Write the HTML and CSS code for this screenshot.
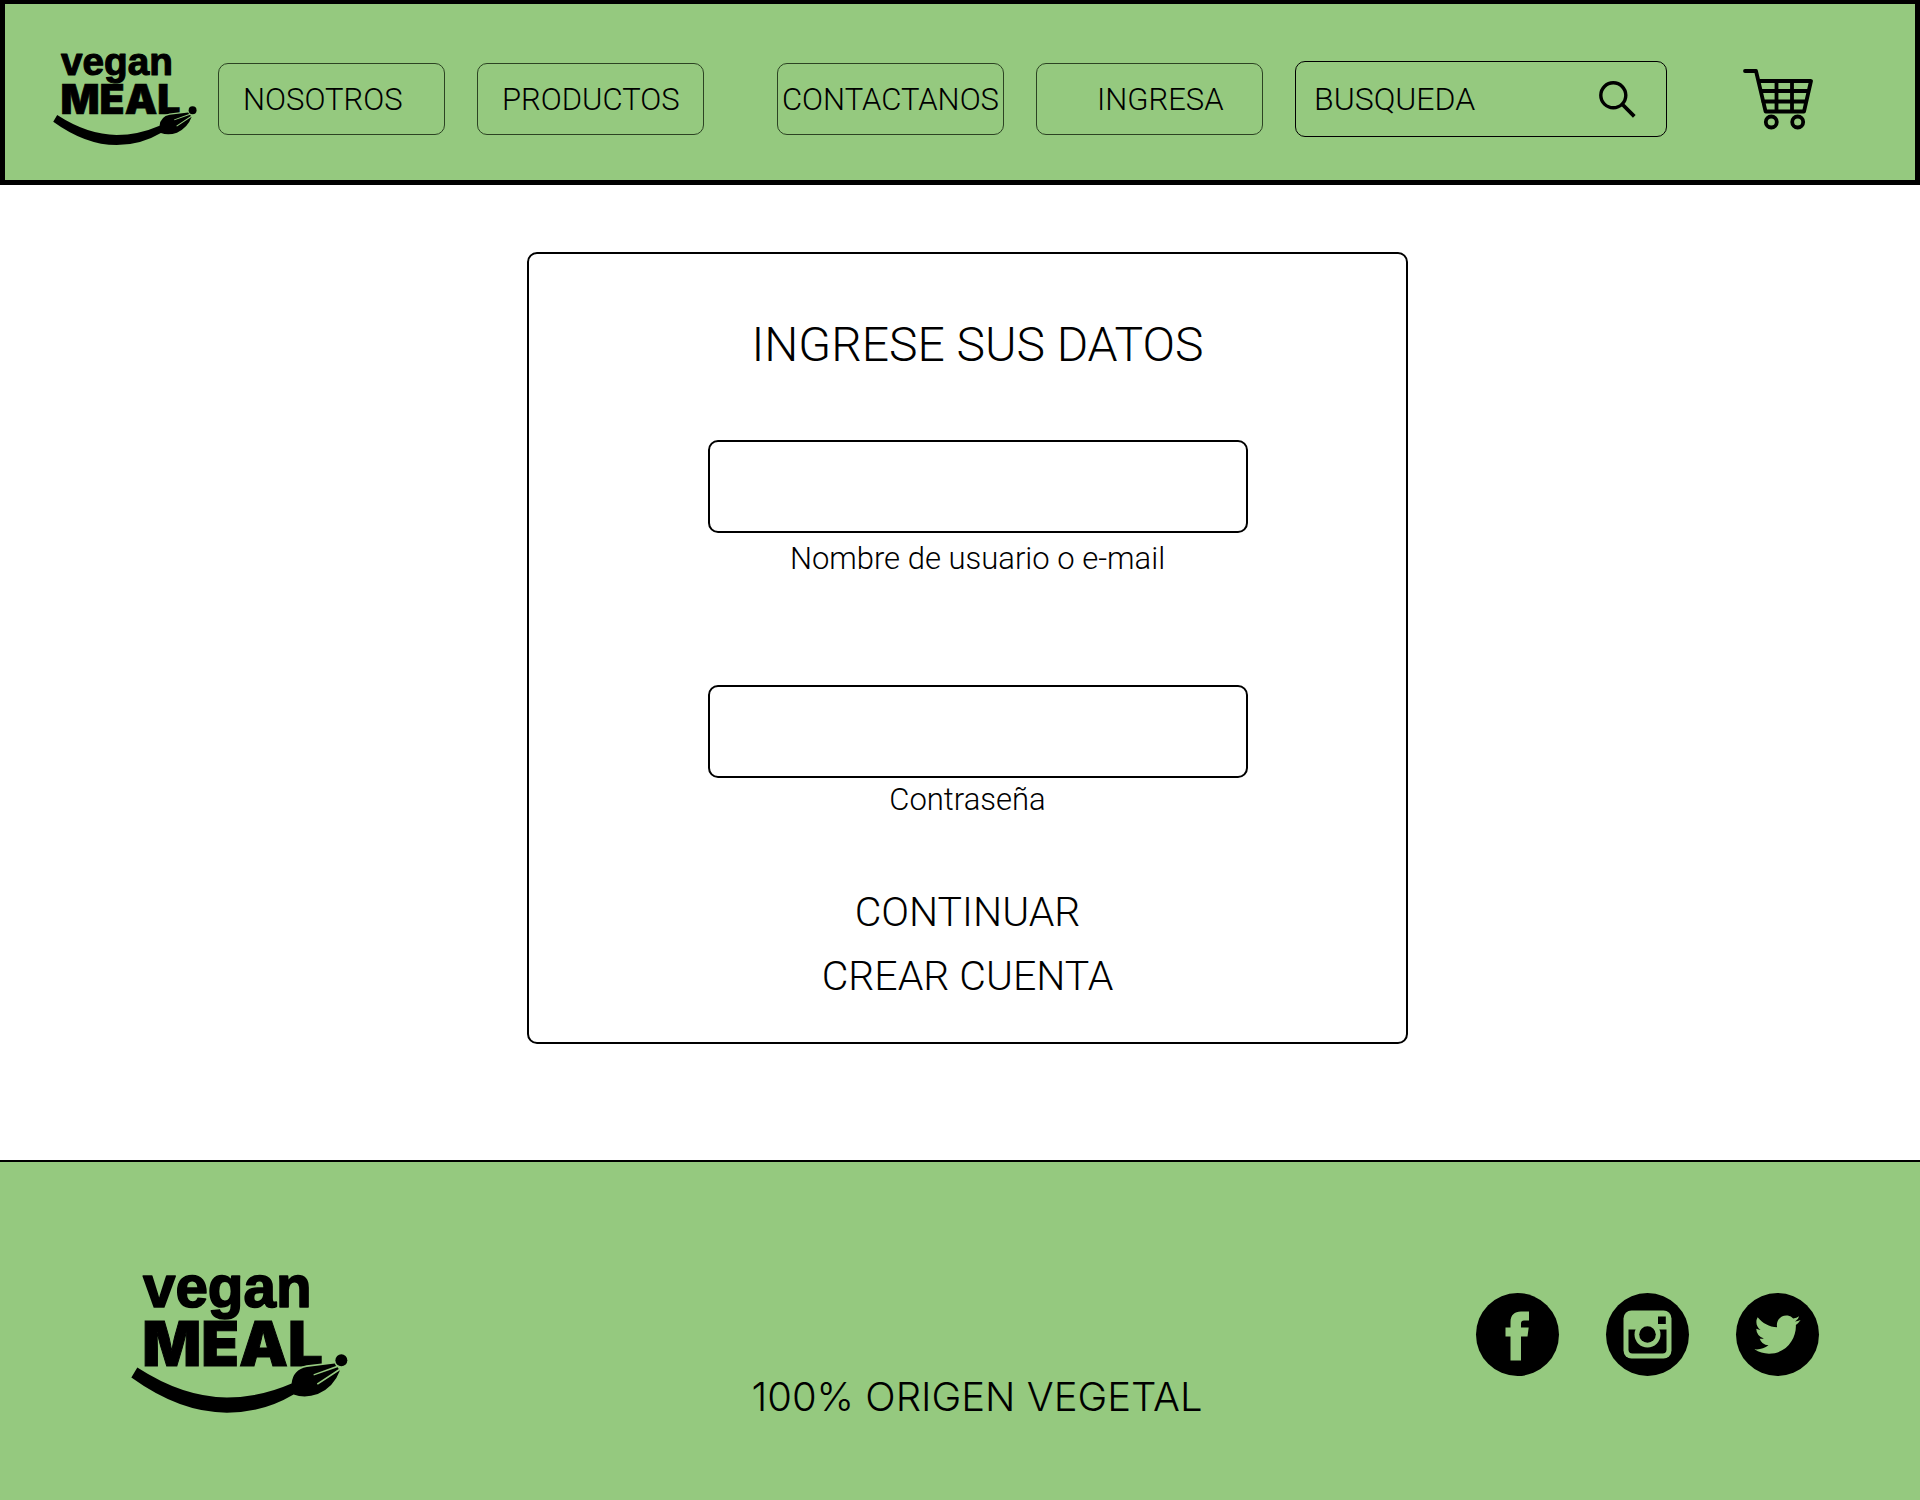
FILE: index.html
```html
<!DOCTYPE html>
<html lang="es">
<head>
<meta charset="utf-8">
<meta name="viewport" content="width=device-width, initial-scale=1">
<title>Vegan Meal - Ingresa</title>
<link rel="stylesheet" href="styles.css">
</head>
<body>
<header class="header">
  <a class="header-logo" href="#" aria-label="Vegan Meal">
    <svg viewBox="92 100 654 420">
      <text class="logo-top" x="128" y="199">vegan</text>
      <text class="logo-bottom" x="126" y="378">MEAL</text>
      <circle cx="726" cy="360" r="18"/>
      <path class="logo-gap" d="M580 432Q580 388 622 380L706 370"/>
      <path d="M111 382Q250 472 381 472Q480 472 576 430Q580 388 622 380L706 370L710 377L642 402L643 406L715 381L718 386L652 430L655 434L722 390Q704 440 655 462Q615 476 582 463Q490 518 381 518Q240 518 93 412Z"/>
    </svg>
  </a>
  <nav class="nav">
    <a class="nav-link" href="#">NOSOTROS</a>
    <a class="nav-link" href="#">PRODUCTOS</a>
    <a class="nav-link nav-link-contact" href="#">CONTACTANOS</a>
    <a class="nav-link nav-link-login" href="#">INGRESA</a>
  </nav>
  <form class="search">
    <input class="search-input" type="search" placeholder="BUSQUEDA" aria-label="Busqueda">
    <button class="search-button" type="submit" aria-label="Buscar">
      <svg viewBox="0 0 37 37" fill="none" stroke="#000"><circle cx="14.3" cy="14.3" r="12.5" stroke-width="3.4"/><path d="M23.5 23.5L35.3 35.3" stroke-width="3.8"/></svg>
    </button>
  </form>
  <a class="cart" href="#" aria-label="Carrito">
    <svg viewBox="0 0 70 60" fill="none" stroke="#000" stroke-width="3.8" stroke-linecap="round" stroke-linejoin="round"><path d="M2 2H13L22.6 42.5H61L68 12H16M18 22H65M20 32.500H63M33.500 12V42M49 12V42"/><circle cx="28.300" cy="53" r="5.500"/><circle cx="54.700" cy="53" r="5.500"/></svg>
  </a>
</header>

<main class="main">
  <form class="card">
    <h1 class="title">INGRESE SUS DATOS</h1>
    <div class="field">
      <input class="field-input" id="usuario" type="text">
      <label class="field-label" for="usuario">Nombre de usuario o e-mail</label>
    </div>
    <div class="field field-password">
      <input class="field-input" id="clave" type="password">
      <label class="field-label" for="clave">Contraseña</label>
    </div>
    <div class="actions">
      <button class="action" type="submit">CONTINUAR</button>
      <button class="action" type="button">CREAR CUENTA</button>
    </div>
  </form>
</main>

<footer class="footer">
  <a class="footer-logo" href="#" aria-label="Vegan Meal">
    <svg viewBox="92 100 654 420">
      <text class="logo-top" x="128" y="199">vegan</text>
      <text class="logo-bottom" x="126" y="378">MEAL</text>
      <circle cx="726" cy="360" r="18"/>
      <path class="logo-gap" d="M580 432Q580 388 622 380L706 370"/>
      <path d="M111 382Q250 472 381 472Q480 472 576 430Q580 388 622 380L706 370L710 377L642 402L643 406L715 381L718 386L652 430L655 434L722 390Q704 440 655 462Q615 476 582 463Q490 518 381 518Q240 518 93 412Z"/>
    </svg>
  </a>
  <p class="slogan">100% ORIGEN VEGETAL</p>
  <div class="social">
    <a class="social-link" href="#" aria-label="Facebook"><svg viewBox="0 0 83 83"><circle cx="41.500" cy="41.500" r="41.500"/><path class="glyph" d="M34.500 67.500V43.500H29.500V34.500H34.500V29C34.500 22 38.500 18.500 45 18.500H53V27.500H48C46 27.500 45 28.500 45 30.500V34.500H52.700L51.500 43.500H45V67.500Z"/></svg></a>
    <a class="social-link" href="#" aria-label="Instagram"><svg viewBox="0 0 83 83"><circle cx="41.500" cy="41.500" r="41.500"/><rect class="glyph" x="17.500" y="17.500" width="48" height="48" rx="8"/><path d="M22.500 36.500H60.500V56.500Q60.500 60.500 56.500 60.500H26.500Q22.500 60.500 22.500 56.500Z"/><circle class="glyph" cx="41.500" cy="41.500" r="13"/><circle cx="41.500" cy="41.500" r="8.300"/><path d="M52 23.500H59.800V31H52Z"/></svg></a>
    <a class="social-link" href="#" aria-label="Twitter"><svg viewBox="0 0 83 83"><circle cx="41.500" cy="41.500" r="41.500"/><path class="glyph" transform="translate(18.500 18) scale(1.920 1.960)" d="M23.954 4.569a10 10 0 0 1-2.825.775 4.958 4.958 0 0 0 2.163-2.723c-.951.555-2.005.959-3.127 1.184a4.920 4.920 0 0 0-8.384 4.482C7.691 8.094 4.066 6.130 1.640 3.161a4.822 4.822 0 0 0-.666 2.475c0 1.710.87 3.213 2.188 4.096a4.904 4.904 0 0 1-2.228-.616v.061a4.923 4.923 0 0 0 3.946 4.827 4.996 4.996 0 0 1-2.212.085 4.937 4.937 0 0 0 4.604 3.417 9.868 9.868 0 0 1-6.102 2.105c-.39 0-.779-.023-1.170-.067a13.995 13.995 0 0 0 7.557 2.209c9.054 0 13.999-7.496 13.999-13.986 0-.209 0-.420-.015-.630a9.936 9.936 0 0 0 2.460-2.548l-.047-.020z"/></svg></a>
  </div>
</footer>
</body>
</html>
```

FILE: styles.css
```css
* { box-sizing: border-box; }

body {
  margin: 0;
  min-height: 100vh;
  display: flex;
  flex-direction: column;
  background: #fff;
  color: #000;
  font-family: Roboto, "Open Sans", sans-serif;
  font-weight: 300;
}

a { color: inherit; text-decoration: none; }
svg { display: block; width: 100%; overflow: visible; }
input, button { font: inherit; color: inherit; }

.logo-top {
  font: 700 176px "Liberation Sans", Arial, sans-serif;
  stroke: #000;
  stroke-width: 5px;
  stroke-linejoin: round;
}

.logo-bottom {
  font: 900 186px Inter, sans-serif;
  stroke: #000;
  stroke-width: 3px;
}

.logo-gap {
  fill: none;
  stroke: #95c97f;
  stroke-width: 10px;
}

.header {
  display: flex;
  align-items: center;
  padding: 49px 102px 35px 48px;
  border: solid #000;
  border-width: 4px 5px 5px;
  background: #95c97f;
}

.header-logo { flex: none; width: 144px; }

.nav { display: flex; gap: 32px; margin-left: 21px; }

.nav-link {
  display: flex;
  align-items: center;
  width: 227px;
  height: 72px;
  padding-left: 24px;
  border: 1px solid #2c4323;
  border-radius: 10px;
  font-size: 31px;
}

.nav-link-contact {
  justify-content: center;
  margin-left: 41px;
  padding-left: 0;
}

.nav-link-login { padding-left: 60px; }

.search {
  display: flex;
  align-items: center;
  flex: 1;
  min-width: 0;
  height: 76px;
  margin: 0 76px 0 32px;
  padding: 0 30px 0 18px;
  border: 1px solid #000;
  border-radius: 10px;
}

.search-input {
  flex: 1;
  min-width: 0;
  padding: 0;
  border: 0;
  background: none;
  font-size: 32px;
}

.search-input::placeholder { color: #000; opacity: 1; }

.search-button {
  flex: none;
  width: 37px;
  padding: 0;
  border: 0;
  background: none;
}

.cart { flex: none; width: 70px; }

.main {
  display: flex;
  justify-content: center;
  padding: 67px 0 116px 15px;
}

.card {
  width: 881px;
  padding: 61px 0 34px;
  border: 2px solid #000;
  border-radius: 10px;
}

.title {
  margin: 0;
  padding-left: 20px;
  font-size: 48px;
  line-height: 60px;
  font-weight: 300;
  text-align: center;
}

.field {
  display: flex;
  flex-direction: column;
  align-items: center;
  margin-top: 65px;
  padding-left: 20px;
}

.field-input {
  width: 540px;
  height: 93px;
  padding: 0 24px;
  border: 2px solid #000;
  border-radius: 10px;
  background: none;
  font-size: 31px;
}

.field-label {
  margin-top: 8px;
  font-size: 31px;
  line-height: 36px;
}

.field-password { margin-top: 108px; }
.field-password .field-label { margin-top: 4px; padding-right: 20px; }

.actions {
  display: flex;
  flex-direction: column;
  align-items: center;
  margin-top: 62px;
}

.action {
  padding: 0;
  border: 0;
  background: none;
  font-size: 41px;
  line-height: 64px;
}

.footer {
  flex: 1;
  display: grid;
  grid-template-columns: 1fr auto 1fr;
  align-items: start;
  padding: 112px 101px 86px 131px;
  border-top: 2px solid #000;
  background: #95c97f;
}

.footer-logo { width: 217px; }

.slogan {
  margin: 99px 0 0;
  padding-left: 4px;
  font-family: Inter, sans-serif;
  font-size: 40px;
  line-height: 48px;
}

.social {
  display: flex;
  justify-content: flex-end;
  gap: 47px;
  margin-top: 19px;
}

.social-link { width: 83px; }
.glyph { fill: #95c97f; }
```
